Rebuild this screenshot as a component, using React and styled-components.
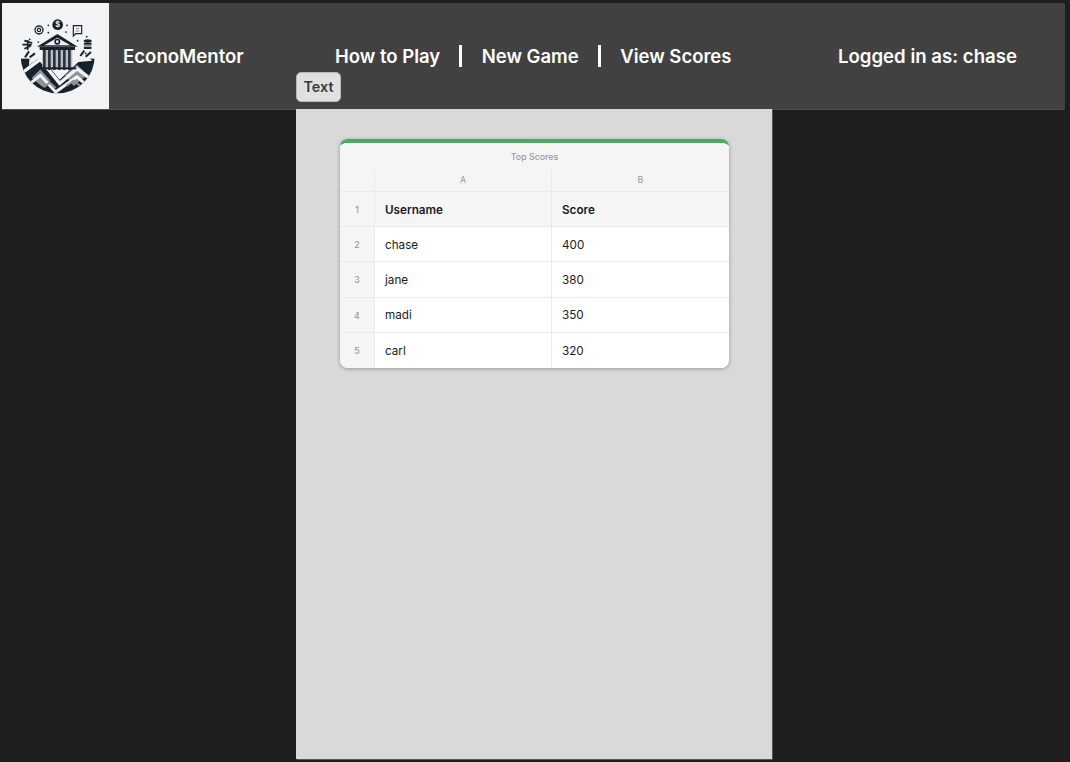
import styled, { createGlobalStyle } from "styled-components";

const GlobalStyle = createGlobalStyle`
  html, body {
    margin: 0;
    background: #1e1e1e;
    font-family: Inter, "Liberation Sans", sans-serif;
  }
`;

const Page = styled.div`
  height: 762px;
  padding: 3px 5px 0 2px;
  box-sizing: border-box;
  overflow: hidden;
`;

const Header = styled.header`
  display: flex;
  height: 106px;
  background: #414141;
  border-radius: 0 2px 2px 0;
  box-shadow: 0 1px 0 #4d4d4d;
  color: #fff;
  font-size: 18.6px;
  font-weight: 600;
`;

const LogoBox = styled.div`
  width: 107px;
  height: 106px;
  flex: none;
  background: #f1f3f5;
`;

const Brand = styled.div`
  width: 173px;
  flex: none;
  padding-left: 14px;
  padding-top: 42px;
  line-height: 22px;
`;

const Center = styled.div`
  width: 476px;
  flex: none;
  padding-top: 39px;
`;

const Nav = styled.nav`
  display: flex;
  align-items: center;
  height: 30px;
  padding-left: 39px;
  font-size: 18.5px;
`;

const NavLink = styled.a`
  margin-bottom: 2px;
  line-height: 22px;
`;

const Separator = styled.span`
  width: 3px;
  height: 22px;
  margin: 0 19.5px 2px 19px;
  background: #fff;
`;

const TextButton = styled.button`
  display: block;
  width: 45px;
  height: 30px;
  padding: 0 0 2px;
  background: #e0e0e0;
  border: 1px solid #b8b8b8;
  border-radius: 5px;
  color: #3a3a3a;
  font-family: inherit;
  font-size: 14.4px;
  font-weight: 600;
`;

const User = styled.div`
  margin-left: 66px;
  padding-top: 42px;
  line-height: 22px;
  white-space: nowrap;
`;

const Panel = styled.main`
  width: 476px;
  height: 650px;
  margin-left: 294px;
  padding: 30px 0 0 44px;
  box-sizing: border-box;
  background: #d9d9d9;
  box-shadow: 1px 1px 0 #555;
`;

const Sheet = styled.section`
  width: 389px;
  background: #fff;
  border-top: 4px solid #4caa62;
  border-radius: 8px;
  box-shadow: 0 1px 4px rgba(0, 0, 0, 0.3);
  overflow: hidden;
  color: #1a1a1a;
  font-size: 11.7px;
`;

const SheetTitle = styled.div`
  height: 27px;
  background: #f5f5f5;
  color: #9a9a9a;
  font-size: 8.8px;
  font-weight: 500;
  line-height: 27px;
  text-align: center;
`;

const Grid = styled.div`
  display: grid;
  grid-template-columns: 35px 177px 177px;
  grid-template-rows: 22px repeat(5, 35.2px);
`;

const Corner = styled.div`
  background: #f5f5f5;
  border-right: 1px solid #eaeaea;
  border-bottom: 1px solid #eaeaea;
`;

const ColumnHead = styled.div`
  display: flex;
  align-items: center;
  justify-content: center;
  padding-bottom: 3px;
  background: #f5f5f5;
  border-right: ${(p) => (p.$last ? "none" : "1px solid #eaeaea")};
  border-bottom: 1px solid #eaeaea;
  color: #9a9a9a;
  font-size: 8.8px;
`;

const RowHead = styled.div`
  display: flex;
  align-items: center;
  justify-content: center;
  padding-top: 1px;
  background: #f5f5f5;
  border-right: 1px solid #eaeaea;
  border-bottom: ${(p) => (p.$last ? "none" : "1px solid #eaeaea")};
  color: #9a9a9a;
  font-size: 8.8px;
  font-weight: 500;
`;

const Cell = styled.div`
  display: flex;
  align-items: center;
  padding: 1px 0 0 10px;
  background: ${(p) => (p.$head ? "#f5f5f5" : "#fff")};
  border-right: ${(p) => (p.$end ? "none" : "1px solid #eaeaea")};
  border-bottom: ${(p) => (p.$last ? "none" : "1px solid #eaeaea")};
  font-weight: ${(p) => (p.$head ? 600 : 400)};
`;

const rows = [
  ["chase", "400"],
  ["jane", "380"],
  ["madi", "350"],
  ["carl", "320"],
];

function Logo() {
  const ink = "#18212e";
  const paper = "#f1f3f5";
  const grey = "#8e9299";
  return (
    <svg viewBox="-39 -27 321 318" width="107" height="106">
      <defs>
        <clipPath id="disc">
          <circle cx="128" cy="133" r="111" />
        </clipPath>
      </defs>

      {/* round base with the hills */}
      <g clipPath="url(#disc)">
        <rect x="10" y="140" width="240" height="110" fill={ink} />
        <path d="M44 128 H212 L232 146 L190 150 L134 203 L78 134 L42 160Z" fill={paper} />
        <path d="M150 190 L186 158 L218 188 L176 222Z" fill={grey} />
        <path d="M50 198 L76 172 L106 206 L84 226Z" fill={grey} />
        <path d="M14 188 L76 142 L134 214 L186 170 L244 214" fill="none" stroke={paper} strokeWidth="10" />
        <path d="M46 214 L76 190 L122 240 L186 194 L226 230" fill="none" stroke={paper} strokeWidth="9" />
        <path d="M86 226 L104 212 L122 228" fill="none" stroke={grey} strokeWidth="6" />
        <path d="M154 222 L176 206 L198 224" fill="none" stroke={grey} strokeWidth="6" />
      </g>

      {/* bank */}
      <path d="M127 66 L188 104 L66 104Z" fill={ink} />
      <path d="M127 77 L166 100 L88 100Z" fill={paper} />
      <circle cx="127" cy="89" r="9" fill={ink} />
      <circle cx="127" cy="89" r="4" fill={paper} />
      <rect x="74" y="105" width="106" height="9" fill={ink} />
      <rect x="82" y="114" width="90" height="54" fill="#b9bcc1" />
      {[84, 99, 114, 129, 144, 159].map((x) => (
        <rect key={x} x={x} y="114" width="8" height="60" fill="#2a3340" />
      ))}
      <rect x="70" y="166" width="114" height="6" fill={ink} />

      {/* icons floating round the bank */}
      <circle cx="128" cy="38" r="16" fill={ink} />
      <text x="128" y="46" fill={paper} fontFamily="Inter, sans-serif" fontSize="22" fontWeight="700" textAnchor="middle">$</text>
      <circle cx="72" cy="54" r="12" fill="none" stroke={ink} strokeWidth="4" />
      <circle cx="72" cy="54" r="5" fill="none" stroke={ink} strokeWidth="3.5" />
      <path d="M175 41 H200 V65 H182 L175 72Z" fill="none" stroke={ink} strokeWidth="3.5" />
      <path d="M182 50 H193 M182 57 H193" stroke={grey} strokeWidth="3" />
      <ellipse cx="218" cy="87" rx="12" ry="5" fill={ink} />
      <rect x="206" y="92" width="24" height="6" rx="3" fill={ink} />
      <rect x="206" y="99" width="24" height="5" rx="2" fill={grey} />
      <rect x="206" y="105" width="24" height="6" rx="3" fill={ink} />
      <path d="M28 86 L52 93 M22 98 H50 M28 110 L48 101 M38 84 V114" stroke={ink} strokeWidth="5" fill="none" />
      <path d="M30 136 L42 118 M44 136 L60 124" stroke={ink} strokeWidth="6" />
      <path d="M212 134 L228 120 M196 132 L208 116" stroke={ink} strokeWidth="6" />
      {[
        [44, 82],
        [100, 40],
        [100, 62],
        [156, 40],
        [153, 60],
        [215, 74],
        [70, 90],
        [188, 86],
        [212, 124],
      ].map(([cx, cy]) => (
        <circle key={`${cx}-${cy}`} cx={cx} cy={cy} r="2.6" fill={ink} />
      ))}
    </svg>
  );
}

export default function App() {
  return (
    <Page>
      <GlobalStyle />
      <Header>
        <LogoBox>
          <Logo />
        </LogoBox>
        <Brand>EconoMentor</Brand>
        <Center>
          <Nav>
            <NavLink>How to Play</NavLink>
            <Separator />
            <NavLink>New Game</NavLink>
            <Separator />
            <NavLink>View Scores</NavLink>
          </Nav>
          <TextButton>Text</TextButton>
        </Center>
        <User>Logged in as: chase</User>
      </Header>
      <Panel>
        <Sheet>
          <SheetTitle>Top Scores</SheetTitle>
          <Grid>
            <Corner />
            <ColumnHead>A</ColumnHead>
            <ColumnHead $last>B</ColumnHead>
            <RowHead>1</RowHead>
            <Cell $head>Username</Cell>
            <Cell $head $end>Score</Cell>
            {rows.map(([name, score], i) => {
              const last = i === rows.length - 1;
              return [
                <RowHead key={`n${i}`} $last={last}>{i + 2}</RowHead>,
                <Cell key={`u${i}`} $last={last}>{name}</Cell>,
                <Cell key={`s${i}`} $last={last} $end>{score}</Cell>,
              ];
            })}
          </Grid>
        </Sheet>
      </Panel>
    </Page>
  );
}
